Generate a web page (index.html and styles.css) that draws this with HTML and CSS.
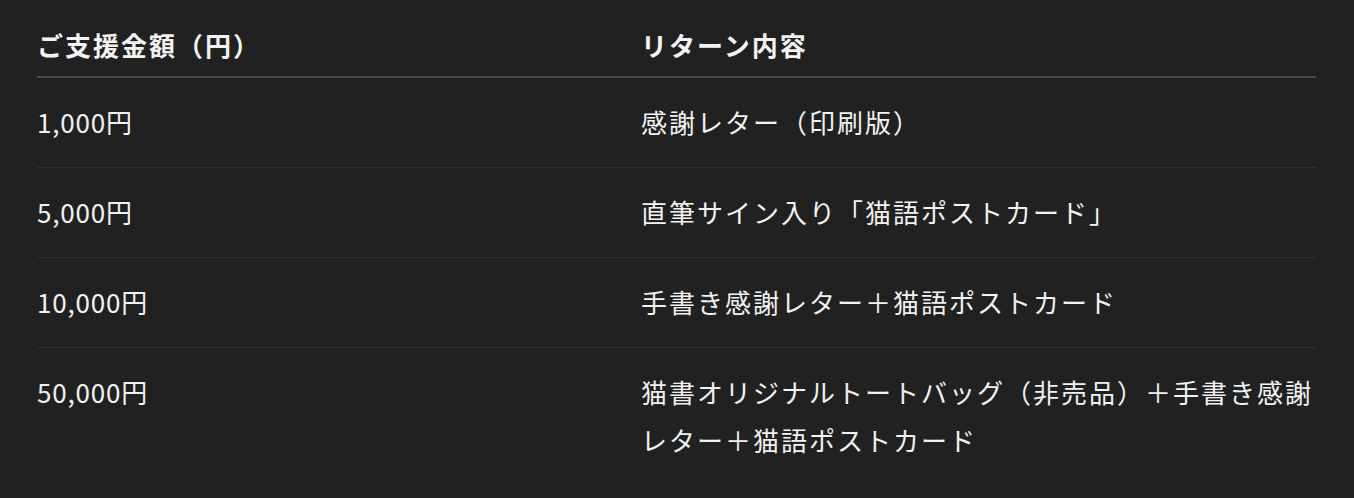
FILE: index.html
```html
<!DOCTYPE html>
<html lang="ja">
<head>
<meta charset="utf-8">
<link rel="stylesheet" href="styles.css">
</head>
<body>
<div class="wrap">
  <table class="returns">
    <thead>
      <tr><th class="amount">ご支援金額（円）</th><th>リターン内容</th></tr>
    </thead>
    <tbody>
      <tr><td class="amount">1,000円</td><td>感謝レター（印刷版）</td></tr>
      <tr><td class="amount">5,000円</td><td>直筆サイン入り「猫語ポストカード」</td></tr>
      <tr><td class="amount">10,000円</td><td>手書き感謝レター＋猫語ポストカード</td></tr>
      <tr><td class="amount">50,000円</td><td>猫書オリジナルトートバッグ（非売品）＋手書き感謝レター＋猫語ポストカード</td></tr>
    </tbody>
  </table>
</div>
</body>
</html>
```
FILE: styles.css
```css
html, body {
  margin: 0;
  background: #212121;
}
body {
  font-family: "Noto Sans CJK JP", "Noto Sans", sans-serif;
  color: #f2f2f2;
}
.wrap {
  padding: 0 38px 0 37px;
}
.returns {
  width: 100%;
  border-collapse: collapse;
  table-layout: fixed;
  font-size: 26px;
  letter-spacing: 2px;
  line-height: 48px;
}
.returns th {
  text-align: left;
  font-weight: 700;
  padding: 21px 0 7px;
  border-bottom: 2px solid #4a4a4a;
}
.returns td {
  padding: 20px 0 21px;
  font-weight: 400;
  vertical-align: top;
  border-bottom: 1px solid #303030;
}
.returns tbody tr:last-child td {
  border-bottom: none;
}
.returns td.amount {
  letter-spacing: 0.8px;
}
.returns .amount {
  width: 604px;
}
```
